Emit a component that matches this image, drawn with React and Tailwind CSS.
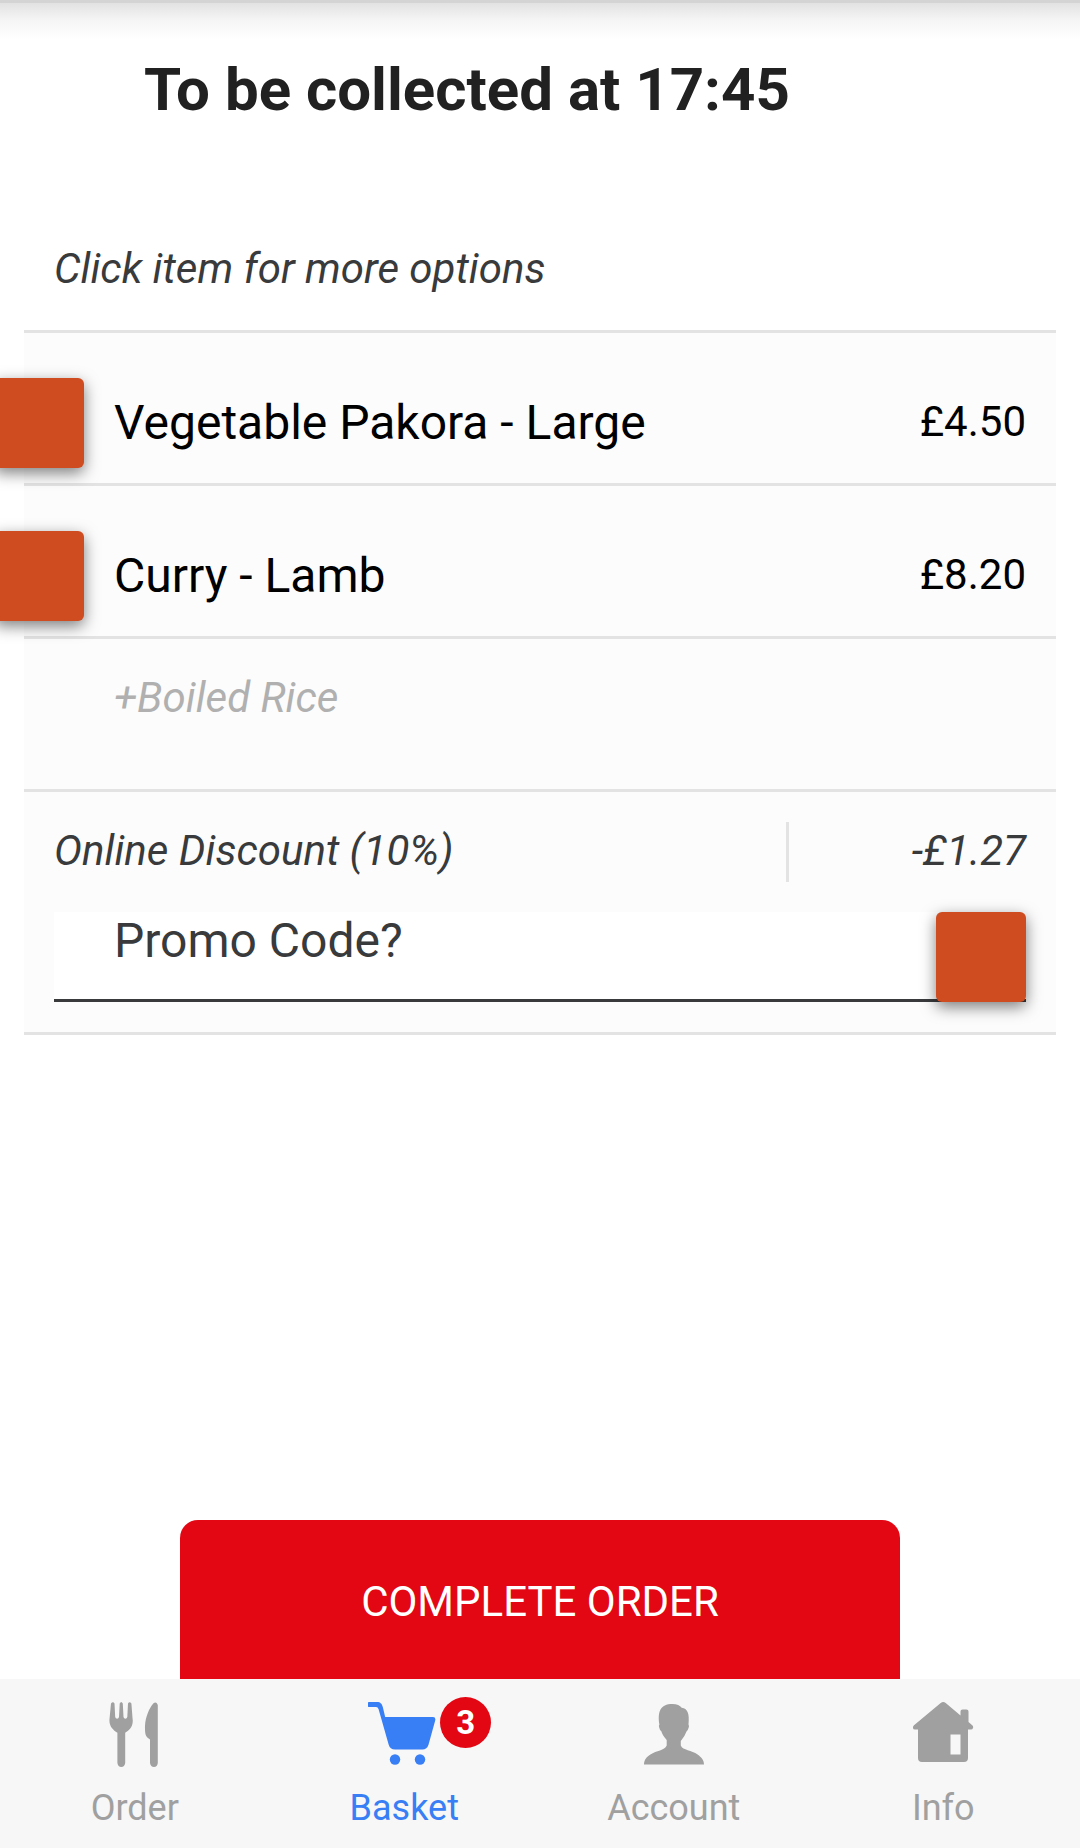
const items = [
  { name: 'Vegetable Pakora - Large', price: '£4.50' },
  { name: 'Curry - Lamb', price: '£8.20' },
]

function OrderIcon() {
  return (
    <svg viewBox="3 0 72 66" className="h-[66px] w-[72px]" fill="currentColor" aria-hidden="true">
      <path d="M15 1.500q2-2.600 3.500 0L19.200 15q.4 1.800 1.900 1.800t1.900-1.800l.7-13.500q1.500-3 3.100 0l.7 13.500q.4 1.800 1.900 1.800t1.900-1.800L32 1.500q1.500-2.600 3.400 0l1.200 15.500c1 7-3 11.500-7.400 13.800V61q-.6 4-3.900 4t-3.900-4V30.800C17 28 12.800 24 13.500 17z" />
      <path d="M61.800 3v58q-.5 4-3.800 4t-4-4V37.500C50 34.500 48.800 34 49 24 49.500 15 53 6.500 57.500 1.300q2.800-2 4.300 1.700z" />
    </svg>
  )
}

function BasketIcon() {
  return (
    <svg viewBox="3 0 72 66" className="h-[66px] w-[72px]" fill="currentColor" aria-hidden="true">
      <path d="M4.500 0H12c3.500 0 5 2 5.800 5l2.400 10H68q3 0 2.200 3.500l-6.700 24.300q-1.500 4.700-6 4.700H30q-5 0-6.300-4.700L13.600 7.300Q13 5 11 5H4.500a2.500 2.500 0 0 1 0-5z" />
      <circle cx="30" cy="57.500" r="5.200" />
      <circle cx="55" cy="57.500" r="5.200" />
    </svg>
  )
}

function AccountIcon() {
  return (
    <svg viewBox="0 0 72 66" className="h-[66px] w-[72px]" fill="currentColor" aria-hidden="true">
      <path d="M34.500 2c4.500 0 7.500 1.300 9.200 3.800 5.800.7 8 5.700 6.800 16.700q.9 1.300.2 3-1 3.500-2.200 4-1.500 4.500-5.700 9.500v4.500c2 5 11 4.500 16.800 9C63.500 55.500 66 58 66 62.500H6c0-4.500 2.500-7.500 6.400-10C18.500 48.500 26.500 48.500 28.700 43.500V38c-3.200-3.500-4.200-5.500-5.400-8.700q-1.500-.8-2.200-4-.6-1.600.3-2.800C19.500 10 22 2 34.500 2z" />
    </svg>
  )
}

function InfoIcon() {
  return (
    <svg viewBox="0 0 72 66" className="h-[66px] w-[72px]" fill="currentColor" aria-hidden="true">
      <path
        fillRule="evenodd"
        d="M33.700 1q2.500-2 5 0L53.500 13.500V9.500q0-2 2-2h4q2 0 2 2V20l4 3.500q1 1.300.5 2.500-.5 1.500-2 1.500H61V56q0 4-4 4H15q-4 0-4-4V27.500H8q-2 0-2-1.500-.3-1.500 1-2.700zM43.500 32.500v20h10v-20z"
      />
    </svg>
  )
}

const tabs = [
  { label: 'Order', icon: OrderIcon },
  { label: 'Basket', icon: BasketIcon, active: true, badge: 3 },
  { label: 'Account', icon: AccountIcon },
  { label: 'Info', icon: InfoIcon },
]

function SquareButton({ label }) {
  return (
    <button
      type="button"
      aria-label={label}
      className="size-[90px] shrink-0 rounded-md bg-[#cf4b20] shadow-[0_5px_15px_rgba(0,0,0,0.5)]"
    />
  )
}

export default function App() {
  return (
    <div className="flex min-h-screen flex-col overflow-x-hidden bg-white font-['Roboto',sans-serif] text-[42px] text-[#383a3c]">
      <main className="flex flex-1 flex-col">
        {/* Shadow under the app header */}
        <div className="h-12">
          <div className="h-[3px] bg-[#d4d4d4]" />
          <div className="h-9 bg-gradient-to-b from-[#e2e2e2] via-[#f6f6f6] to-white" />
        </div>

        <h1 className="pl-36 text-[60px] leading-[84px] font-bold text-[#212121]">To be collected at 17:45</h1>
        <p className="mt-[113px] mb-[37px] px-[54px] leading-12 italic">Click item for more options</p>

        {/* Basket lines */}
        <section className="mx-6 border-y-3 border-[#e3e3e3] bg-[#fcfcfc]">
          <ul>
            {items.map((item) => (
              <li key={item.name} className="flex items-center border-b-3 border-[#e3e3e3] pt-[45px] pr-[30px] pb-[15px] text-black">
                <div className="-ml-[30px] flex">
                  <SquareButton label={`Remove ${item.name}`} />
                </div>
                <button type="button" className="flex-1 pl-[30px] text-left text-[48px] leading-[60px]">
                  {item.name}
                </button>
                <span className="pb-1">{item.price}</span>
              </li>
            ))}
            <li className="h-[153px] border-b-3 border-[#e3e3e3] pt-[34px] pl-[90px] leading-[50px] text-[#b0b0b0] italic">
              +Boiled Rice
            </li>
          </ul>

          <div className="p-[30px]">
            <div className="flex h-[60px] items-center italic">
              <span className="flex-1 pb-1">Online Discount (10%)</span>
              <span className="flex h-full w-[240px] items-center justify-end border-l-3 border-[#e3e3e3] pb-1">-£1.27</span>
            </div>

            {/* Promo code */}
            <form className="relative mt-[30px] flex h-[90px]">
              <input
                type="text"
                aria-label="Promo code"
                placeholder="Promo Code?"
                className="h-full w-full min-w-0 border-b-3 border-[#383a3c] bg-white pr-[120px] pb-[30px] pl-[60px] text-[48px] leading-[56px] outline-none placeholder:text-[#383a3c]"
              />
              <div className="absolute top-0 right-0 flex">
                <SquareButton label="Apply promo code" />
              </div>
            </form>
          </div>
        </section>

        <button type="button" className="mx-auto mt-auto h-[159px] w-2/3 rounded-t-[18px] bg-[#e30613] pt-1 text-white">
          COMPLETE ORDER
        </button>
      </main>

      <nav className="grid h-[169px] grid-cols-4 bg-[#f7f7f7] pr-0.5 text-[36px]">
        {tabs.map((tab) => (
          <a
            key={tab.label}
            href={`#${tab.label.toLowerCase()}`}
            className={`flex flex-col items-center gap-4 pt-[23px] ${tab.active ? 'text-[#387ef5]' : 'text-[#a0a0a0]'}`}
          >
            <span className="relative">
              <tab.icon />
              {tab.badge && (
                <span className="absolute -top-[5px] left-full flex size-[51px] items-center justify-center rounded-full bg-[#e30613] text-[33px] font-bold text-white">
                  {tab.badge}
                </span>
              )}
            </span>
            <span className="leading-12">{tab.label}</span>
          </a>
        ))}
      </nav>
    </div>
  )
}
